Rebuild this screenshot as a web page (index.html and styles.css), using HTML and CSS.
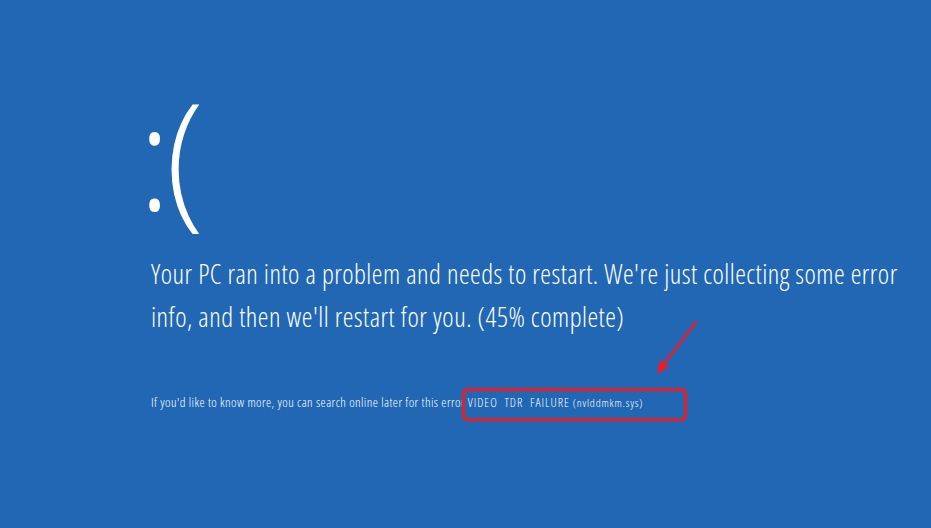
FILE: index.html
```html
<!DOCTYPE html>
<html lang="en">
<head>
<meta charset="utf-8">
<title>Blue screen</title>
<link rel="stylesheet" href="styles.css">
</head>
<body>
<main class="screen">
  <div class="face">:(</div>
  <p class="message">Your PC ran into a problem and needs to restart. We're just collecting some error<br>info, and then we'll restart for you. (45% complete)</p>
  <p class="details">If you'd like to know more, you can search online later for this error <span class="code">VIDEO&nbsp; TDR&nbsp; FAILURE</span> <span class="file">(nvlddmkm.sys)</span></p>
  <div class="highlight"></div>
  <svg class="arrow" width="50" height="60" viewBox="0 0 50 60">
    <line x1="44" y1="2" x2="9" y2="48" stroke="#ec1c24" stroke-width="2.5" stroke-linecap="round"/>
    <path d="M5 54 L8 40 L17 47 Z" fill="#ec1c24"/>
  </svg>
</main>
</body>
</html>
```
FILE: styles.css
```css
html, body {
  margin: 0;
  padding: 0;
}
body {
  background: #2167b3;
  width: 931px;
  height: 528px;
  overflow: hidden;
  color: #ffffff;
  font-family: "Open Sans", "Noto Sans", sans-serif;
  font-weight: 300;
}
.screen {
  position: relative;
  height: 528px;
  padding: 74px 0 0 151px;
  box-sizing: border-box;
}
.face {
  margin-left: -11px;
  font-size: 147px;
  line-height: 160px;
  height: 160px;
  font-weight: 300;
  font-stretch: 75%;
  letter-spacing: -5px;
}
.message {
  margin: 18px 0 0 0;
  font-size: 27px;
  line-height: 43px;
  font-stretch: 75%;
  letter-spacing: 0.5px;
  white-space: nowrap;
}
.details {
  margin: 56px 0 0 0;
  font-size: 13px;
  line-height: 16px;
  font-weight: 300;
  font-stretch: 75%;
  letter-spacing: 0.44px;
  white-space: nowrap;
}
.code {
  font-size: 12.5px;
  letter-spacing: 1px;
}
.file {
  font-size: 11.5px;
  letter-spacing: 0.8px;
}
.highlight {
  position: absolute;
  left: 462px;
  top: 388px;
  width: 219px;
  height: 27px;
  border: 3px solid #ec1c24;
  border-radius: 5px;
}
.arrow {
  position: absolute;
  left: 652px;
  top: 320px;
}
```
